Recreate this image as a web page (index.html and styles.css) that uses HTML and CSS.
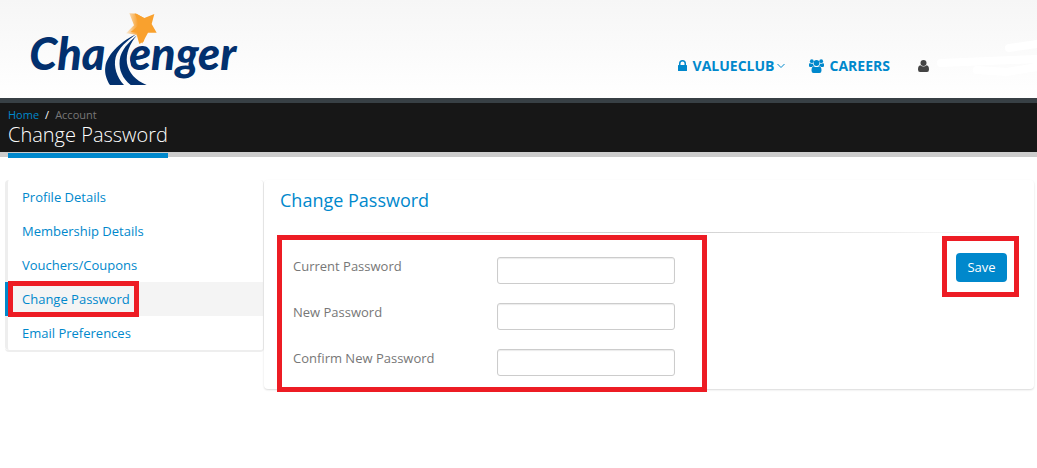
FILE: index.html
```html
<!DOCTYPE html>
<html lang="en">

<head>
  <meta charset="utf-8">
  <title>Change Password</title>
  <link rel="stylesheet" href="styles.css">
</head>

<body>
  <!-- Header -->
  <header class="header">
    <a href="#home" class="logo" aria-label="Challenger">
      <svg width="240" height="98" viewBox="0 0 720 294">
        <defs>
          <linearGradient id="trail" x1="0" y1="0" x2="1" y2="0">
            <stop offset="0" stop-color="#f9a12e" stop-opacity="0.15"/>
            <stop offset="0.6" stop-color="#f9a12e"/>
          </linearGradient>
        </defs>
        <text class="logo-text" x="28" y="210">Cha</text>
        <text class="logo-text" x="327" y="210">enger</text>
        <path fill="#fafafa" d="M330 120C290 140 258 165 250 205L256 214L300 240L334 205L328 170L352 104Z"/>
        <path fill="#02306e" d="M348 103C310 120 262 160 256 200C253 220 260 240 270 255H312C290 232 280 200 287 172C294 146 322 122 348 103Z"/>
        <path fill="#02306e" d="M351 106C325 128 303 150 299 180C296 210 308 236 332 255H380C346 242 326 218 321 190C317 160 330 130 351 106Z"/>
        <path fill="url(#trail)" d="M328 40L350 41L378 58L372 124L358 132L350 104L318 100L342 76Z"/>
        <path fill="#f9a12e" d="M344 40L373 54L403 42L395 72L410 98L384 98L366 131L362 100L332 96L358 74Z"/>
      </svg>
    </a>
    <nav class="nav">
      <a href="#valueclub">
        <svg width="9" height="12" viewBox="0 0 9 12"><path fill="currentColor" fill-rule="evenodd" d="M1 5V3.500A3.500 3.500 0 0 1 8 3.500V5H8.400Q9 5 9 5.600V10.400Q9 11 8.400 11H.6Q0 11 0 10.400V5.600Q0 5 .6 5ZM2.500 5H6.500V3.500A2 2 0 0 0 2.500 3.500Z"/></svg>
        <span>VALUECLUB</span>
        <svg class="caret" width="8" height="6" viewBox="0 0 8 6"><path fill="none" stroke="currentColor" d="M.5 1L4 4.500L7.500 1"/></svg>
      </a>
      <a href="#careers">
        <svg width="15" height="14" viewBox="0 0 15 14"><g fill="currentColor"><circle cx="2.800" cy="2.200" r="1.900"/><circle cx="12.200" cy="2.200" r="1.900"/><circle cx="7.500" cy="4" r="2.900"/><path d="M0 7V5.500Q0 4 1 4.200Q2.500 5 4 4.500Q4 6 5 7Q3.500 7 2.800 8H1.200Q0 8 0 7ZM15 7V5.500Q15 4 14 4.200Q12.500 5 11 4.500Q11 6 10 7Q11.500 7 12.200 8H13.800Q15 8 15 7ZM2.500 11.500Q2.500 7.500 4.700 7.200Q7.500 9 10.300 7.200Q12.500 7.500 12.500 11.500Q12.500 14 10.500 14H4.500Q2.500 14 2.500 11.500Z"/></g></svg>
        <span>CAREERS</span>
      </a>
      <a href="#account" class="user" aria-label="Account">
        <svg width="11" height="12" viewBox="0 0 11 12"><g fill="currentColor"><circle cx="5.500" cy="3" r="3"/><path d="M0 9.500Q0 5.500 2.300 5.200Q5.500 8 8.700 5.200Q11 5.500 11 9.500Q11 12 9 12H2Q0 12 0 9.500Z"/></g></svg>
      </a>
      <svg class="smear" width="104" height="40" viewBox="0 0 104 40"><path fill="none" stroke="#fff" stroke-width="8" stroke-linecap="round" d="M76 8L104 4M8 23L104 19M44 30L74 32L104 27"/></svg>
    </nav>
  </header>

  <!-- Page title -->
  <section class="page-top">
    <ul class="breadcrumb">
      <li><a href="#home">Home</a></li>
      <li>Account</li>
    </ul>
    <h1>Change Password</h1>
  </section>

  <main class="container">
    <!-- Account menu -->
    <ul class="side-menu">
      <li><a href="#profile">Profile Details</a></li>
      <li><a href="#membership">Membership Details</a></li>
      <li><a href="#vouchers">Vouchers/Coupons</a></li>
      <li class="active"><a href="#password">Change Password</a></li>
      <li><a href="#email">Email Preferences</a></li>
    </ul>

    <!-- Password form -->
    <div class="panel">
      <h2>Change Password</h2>
      <hr>
      <form class="password-form">
        <div class="fields marked">
          <label for="current">Current Password</label>
          <input type="password" id="current" name="current">
          <label for="new">New Password</label>
          <input type="password" id="new" name="new">
          <label for="confirm">Confirm New Password</label>
          <input type="password" id="confirm" name="confirm">
        </div>
        <div class="actions marked">
          <button type="submit">Save</button>
        </div>
      </form>
    </div>
  </main>
</body>

</html>
```
FILE: styles.css
```css
/* Global Styles */
* {
  box-sizing: border-box;
}

body {
  margin: 0;
  min-height: 100vh;
  background-color: #FFFFFF;
  color: #777777;
  font-family: "Open Sans", Arial, sans-serif;
  font-size: 13px;
  line-height: 20px;
}

a {
  color: #0088CC;
  text-decoration: none;
}

ul {
  list-style: none;
  margin: 0;
  padding: 0;
}

/* Header CSS */
.header {
  display: flex;
  justify-content: space-between;
  background: linear-gradient(#F6F6F6, #FFFFFF);
}

.logo {
  margin-left: 20px;
}

.logo svg {
  display: block;
}

.logo-text {
  fill: #02306E;
  font-family: Lato, sans-serif;
  font-size: 135px;
  font-style: italic;
  font-weight: 900;
}

.nav {
  position: relative;
  display: flex;
  align-items: center;
  gap: 24px;
  padding: 34px 108px 0 0;
}

.nav a {
  display: flex;
  align-items: center;
  gap: 6px;
  font-size: 14px;
  font-weight: 700;
}

.nav .caret {
  margin-left: -4px;
}

.nav .user {
  color: #444444;
  margin-left: 4px;
}

.smear {
  position: absolute;
  right: 0;
  top: 40px;
}

/* Page Title CSS */
.page-top {
  background-color: #171717;
  border-top: 5px solid #384045;
  border-bottom: 5px solid #CCCCCC;
  height: 59px;
  padding: 2px 8px 0;
}

.breadcrumb {
  display: flex;
  font-size: 11px;
}

.breadcrumb li + li::before {
  content: "/";
  color: #FFFFFF;
  padding: 0 6px;
}

.page-top h1 {
  display: inline-block;
  margin: 0;
  padding-bottom: 8px;
  border-bottom: 5px solid #0088CC;
  color: #FFFFFF;
  font-size: 20px;
  font-weight: 300;
  line-height: 20px;
}

/* Account Menu CSS */
.container {
  display: flex;
  align-items: flex-start;
  padding: 23px 3px 20px 5px;
}

.side-menu {
  width: 259px;
  border: 1px solid #EEEEEE;
  border-width: 0 1px 2px 0;
  border-radius: 4px;
}

.side-menu li {
  border-left: 3px solid #EEEEEE;
  padding: 7px 14px;
}

.side-menu li:first-child {
  border-top-left-radius: 4px;
}

.side-menu li:last-child {
  border-bottom-left-radius: 4px;
}

.side-menu .active {
  background-color: #F4F4F4;
  border-left-color: #0088CC;
}

.side-menu .active a {
  margin-left: -5px;
  padding-left: 5px;
  outline: 5px solid #ED1C24;
  outline-offset: 4px;
}

/* Panel CSS */
.panel {
  flex: 1;
  padding: 0 15px 0 13px;
  border-radius: 4px;
  box-shadow: 0 1px 2px rgba(0, 0, 0, 0.15);
}

.panel h2 {
  margin: 0;
  padding: 10px 3px 22px;
  color: #0088CC;
  font-size: 18px;
  font-weight: 400;
}

.panel hr {
  height: 1px;
  margin: 0 0 2px;
  border: 0;
  background: linear-gradient(to right, transparent, #CCCCCC, transparent);
}

/* Form CSS */
.password-form {
  display: flex;
  justify-content: space-between;
  align-items: flex-start;
}

.marked {
  border: 5px solid #ED1C24;
}

.fields {
  display: grid;
  grid-template-columns: 204px 178px;
  row-gap: 19px;
  width: 430px;
  margin-bottom: -3px;
  padding: 17px 11px 11px;
}

.fields label {
  line-height: 18px;
}

.fields input {
  height: 27px;
  border: 1px solid #CCCCCC;
  border-radius: 3px;
  box-shadow: inset 0 1px 1px rgba(0, 0, 0, 0.08);
}

.actions {
  margin-top: 1px;
  padding: 12px 7px 10px 9px;
}

.actions button {
  display: block;
  width: 51px;
  padding: 4px 0 5px;
  border: 0;
  border-radius: 4px;
  background-color: #0088CC;
  color: #FFFFFF;
  font-family: inherit;
  font-size: 13px;
  line-height: 20px;
  cursor: pointer;
}
```
